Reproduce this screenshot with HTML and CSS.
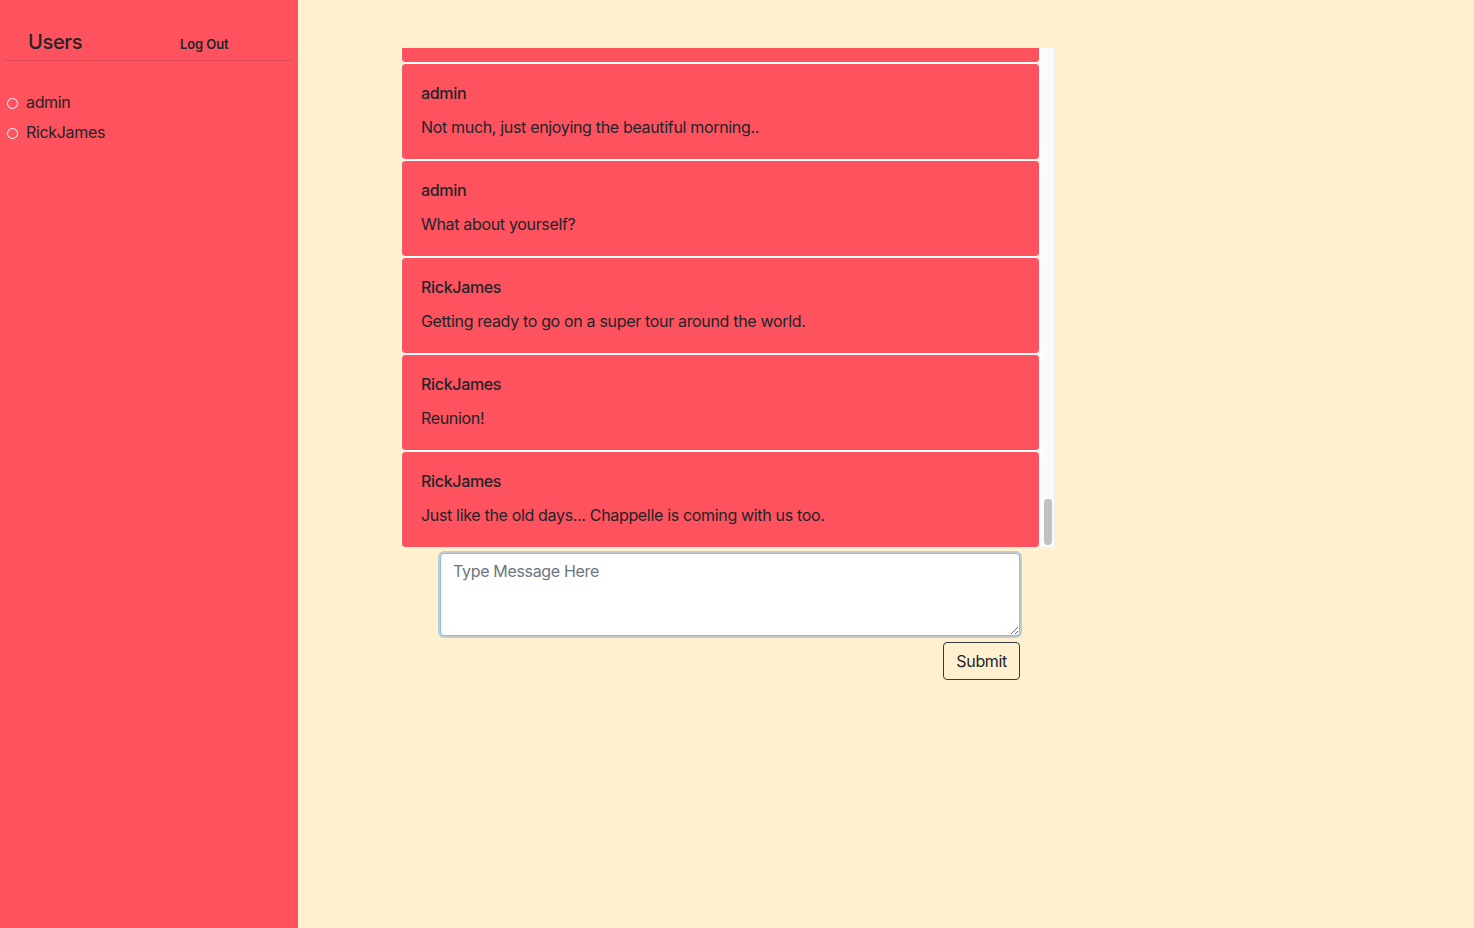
FILE: index.html
```html
<!DOCTYPE html>
<html lang="en">
<head>
<meta charset="utf-8">
<title>Chat</title>
<link rel="stylesheet" href="styles.css">
</head>
<body>
<aside class="sidebar">
  <div class="sidebar-header">
    <h4 class="sidebar-title">Users</h4>
    <a class="logout" href="#">Log Out</a>
  </div>
  <ul class="user-list">
    <li class="user"><span class="status"></span>admin</li>
    <li class="user"><span class="status"></span>RickJames</li>
  </ul>
</aside>
<main class="main">
  <div class="chat-wrap">
    <div class="chat">
      <div class="chat-inner">
        <div class="card"><h6 class="card-title">admin</h6><p class="card-text">Hello?</p></div>
        <div class="card"><h6 class="card-title">admin</h6><p class="card-text">Is anyone here?</p></div>
        <div class="card"><h6 class="card-title">RickJames</h6><p class="card-text">Hey! I'm here.</p></div>
        <div class="card"><h6 class="card-title">admin</h6><p class="card-text">Great, the chat is working.</p></div>
        <div class="card"><h6 class="card-title">RickJames</h6><p class="card-text">Looks good to me.</p></div>
        <div class="card"><h6 class="card-title">admin</h6><p class="card-text">Let me test a few more messages.</p></div>
        <div class="card"><h6 class="card-title">admin</h6><p class="card-text">Testing one.</p></div>
        <div class="card"><h6 class="card-title">admin</h6><p class="card-text">Testing two.</p></div>
        <div class="card"><h6 class="card-title">admin</h6><p class="card-text">Testing three.</p></div>
        <div class="card"><h6 class="card-title">RickJames</h6><p class="card-text">All of them came through.</p></div>
        <div class="card"><h6 class="card-title">admin</h6><p class="card-text">Awesome.</p></div>
        <div class="card"><h6 class="card-title">RickJames</h6><p class="card-text">How long did this take to build?</p></div>
        <div class="card"><h6 class="card-title">admin</h6><p class="card-text">A couple of days.</p></div>
        <div class="card"><h6 class="card-title">RickJames</h6><p class="card-text">Not bad at all.</p></div>
        <div class="card"><h6 class="card-title">admin</h6><p class="card-text">Thanks!</p></div>
        <div class="card"><h6 class="card-title">RickJames</h6><p class="card-text">Can I invite some friends?</p></div>
        <div class="card"><h6 class="card-title">admin</h6><p class="card-text">Sure, just have them sign up.</p></div>
        <div class="card"><h6 class="card-title">RickJames</h6><p class="card-text">Will do.</p></div>
        <div class="card"><h6 class="card-title">admin</h6><p class="card-text">Did the sign up page work for you?</p></div>
        <div class="card"><h6 class="card-title">RickJames</h6><p class="card-text">Yes, no problems.</p></div>
        <div class="card"><h6 class="card-title">admin</h6><p class="card-text">Good to hear.</p></div>
        <div class="card"><h6 class="card-title">RickJames</h6><p class="card-text">The colors are nice.</p></div>
        <div class="card"><h6 class="card-title">admin</h6><p class="card-text">I tried to keep it simple.</p></div>
        <div class="card"><h6 class="card-title">RickJames</h6><p class="card-text">It works.</p></div>
        <div class="card"><h6 class="card-title">admin</h6><p class="card-text">Let me know if anything breaks.</p></div>
        <div class="card"><h6 class="card-title">RickJames</h6><p class="card-text">I will.</p></div>
        <div class="card"><h6 class="card-title">admin</h6><p class="card-text">Checking the scroll now.</p></div>
        <div class="card"><h6 class="card-title">admin</h6><p class="card-text">Still scrolling.</p></div>
        <div class="card"><h6 class="card-title">admin</h6><p class="card-text">Almost there.</p></div>
        <div class="card"><h6 class="card-title">RickJames</h6><p class="card-text">Scroll looks fine on my end.</p></div>
        <div class="card"><h6 class="card-title">admin</h6><p class="card-text">Perfect.</p></div>
        <div class="card"><h6 class="card-title">RickJames</h6><p class="card-text">What else is new?</p></div>
        <div class="card"><h6 class="card-title">admin</h6><p class="card-text">Working on the user list.</p></div>
        <div class="card"><h6 class="card-title">RickJames</h6><p class="card-text">I can see both of us there.</p></div>
        <div class="card"><h6 class="card-title">admin</h6><p class="card-text">That's the idea.</p></div>
        <div class="card"><h6 class="card-title">RickJames</h6><p class="card-text">Nice.</p></div>
        <div class="card"><h6 class="card-title">admin</h6><p class="card-text">Logging out works too.</p></div>
        <div class="card"><h6 class="card-title">RickJames</h6><p class="card-text">I'll try it later.</p></div>
        <div class="card"><h6 class="card-title">admin</h6><p class="card-text">Sounds good.</p></div>
        <div class="card"><h6 class="card-title">RickJames</h6><p class="card-text">Brb.</p></div>
        <div class="card"><h6 class="card-title">RickJames</h6><p class="card-text">Back.</p></div>
        <div class="card"><h6 class="card-title">admin</h6><p class="card-text">Welcome back.</p></div>
        <div class="card"><h6 class="card-title">RickJames</h6><p class="card-text">Thanks, had to grab coffee.</p></div>
        <div class="card"><h6 class="card-title">admin</h6><p class="card-text">Same here.</p></div>
        <div class="card"><h6 class="card-title">RickJames</h6><p class="card-text">Early start today.</p></div>
        <div class="card"><h6 class="card-title">admin</h6><p class="card-text">Me too.</p></div>
        <div class="card"><h6 class="card-title">RickJames</h6><p class="card-text">Weather is great out there.</p></div>
        <div class="card"><h6 class="card-title">admin</h6><p class="card-text">It really is.</p></div>
        <div class="card"><h6 class="card-title">RickJames</h6><p class="card-text">Good morning!</p></div>
        <div class="card"><h6 class="card-title">RickJames</h6><p class="card-text">What are you up to?</p></div>
        <div class="card"><h6 class="card-title">admin</h6><p class="card-text">Not much, just enjoying the beautiful morning..</p></div>
        <div class="card"><h6 class="card-title">admin</h6><p class="card-text">What about yourself?</p></div>
        <div class="card"><h6 class="card-title">RickJames</h6><p class="card-text">Getting ready to go on a super tour around the world.</p></div>
        <div class="card"><h6 class="card-title">RickJames</h6><p class="card-text">Reunion!</p></div>
        <div class="card"><h6 class="card-title">RickJames</h6><p class="card-text">Just like the old days... Chappelle is coming with us too.</p></div>
      </div>
    </div>
    <div class="scrollbar" aria-hidden="true"><span class="scroll-thumb"></span></div>
  </div>
  <form class="message-form">
    <textarea class="message-input" placeholder="Type Message Here"></textarea>
    <div class="form-actions">
      <button type="button" class="submit-btn">Submit</button>
    </div>
  </form>
</main>
</body>
</html>
```
FILE: styles.css
```css
* { box-sizing: border-box; }

html, body {
  height: 100%;
}

body {
  margin: 0;
  display: flex;
  font-family: Inter, "Helvetica Neue", Arial, sans-serif;
  font-size: 16px;
  line-height: 1.5;
  letter-spacing: -0.33px;
  color: #212529;
  background: #fff1d0;
}

.sidebar {
  width: 298px;
  flex: 0 0 298px;
  background: #ff525f;
  padding: 0 6px 0 4px;
}

.sidebar-header {
  display: flex;
  align-items: baseline;
  padding: 30px 0 5px 0;
  border-bottom: 1px solid rgba(0, 0, 0, 0.1);
}

.sidebar-title {
  margin: 0 0 0 24px;
  width: 152px;
  font-size: 20px;
  font-weight: 500;
  line-height: 24px;
}

.logout {
  font-size: 13px;
  font-weight: 600;
  letter-spacing: -0.1px;
  color: #212529;
  text-decoration: none;
}

.user-list {
  list-style: none;
  margin: 0;
  padding: 26px 0 0 0;
}

.user {
  display: flex;
  align-items: center;
  height: 30px;
  padding-left: 3px;
  font-size: 16px;
}

.status {
  width: 11px;
  height: 11px;
  border: 1.5px solid #fff;
  border-radius: 50%;
  margin-right: 8px;
  margin-top: 3px;
}

.main {
  flex: 1;
  padding-top: 48px;
  padding-left: 103px;
}

.chat-wrap {
  display: flex;
  width: 654px;
  height: 499px;
}

.chat {
  width: 639px;
  height: 100%;
  overflow: hidden;
  display: flex;
  flex-direction: column-reverse;
}

.chat-inner {
  margin-bottom: -1px;
}

.scrollbar {
  width: 15px;
  height: 100%;
  background: #fafafa;
  border-left: 2px solid #fff;
  border-right: 1px solid #ececec;
  display: flex;
  flex-direction: column;
  justify-content: flex-end;
  padding: 0 2px 2px 2px;
}

.scroll-thumb {
  display: block;
  height: 46px;
  background: #c1c1c1;
  border-radius: 5px;
}

.card {
  background: #ff525f;
  border: 1px solid #fff;
  border-radius: 4px;
  padding: 20px 19px;
}

.card-title {
  margin: 0 0 12px 0;
  font-size: 16px;
  font-weight: 500;
  line-height: 19px;
}

.card-text {
  margin: 0;
}

.message-form {
  width: 580px;
  margin: 6px 0 0 39px;
}

.message-input {
  display: block;
  width: 580px;
  height: 83px;
  padding: 5px 12px;
  font-family: inherit;
  font-size: 16px;
  line-height: 1.5;
  letter-spacing: -0.33px;
  color: #495057;
  background: #fff;
  border: 1px solid #80bdff;
  border-radius: 4px;
  outline: none;
  box-shadow: 0 0 0 2px rgba(120, 160, 200, 0.45);
  resize: vertical;
}

.message-input::placeholder {
  color: #6c757d;
}

.form-actions {
  display: flex;
  justify-content: flex-end;
  margin-top: 6px;
}

.submit-btn {
  font-family: inherit;
  font-size: 16px;
  line-height: 1.5;
  letter-spacing: -0.33px;
  color: #212529;
  background: transparent;
  border: 1px solid #343a40;
  border-radius: 4px;
  padding: 6px 12px;
  cursor: pointer;
}
```
